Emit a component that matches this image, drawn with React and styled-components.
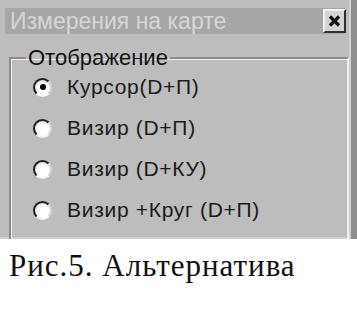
import React from "react";
import styled, { createGlobalStyle } from "styled-components";

const GlobalStyle = createGlobalStyle`
  html, body {
    margin: 0;
    padding: 0;
    background: #ffffff;
  }
  body {
    width: 357px;
    height: 313px;
    overflow: hidden;
  }
`;

const options = [
  { label: "Курсор(D+П)", checked: true },
  { label: "Визир (D+П)" },
  { label: "Визир (D+КУ)" },
  { label: "Визир +Круг (D+П)" },
];

const App = () => {
  return (
    <>
      <GlobalStyle />
      <Window>
        <TitleBar>
          <Title>Измерения на карте</Title>
          <CloseButton>
            <svg width="13" height="12" viewBox="0 0 13 12">
              <path d="M2 1.5 L11 10.5 M11 1.5 L2 10.5" stroke="#111" strokeWidth="3.2" />
            </svg>
          </CloseButton>
        </TitleBar>
        <Group>
          <Legend>Отображение</Legend>
          {options.map((opt) => (
            <Option key={opt.label}>
              <Radio checked={opt.checked} />
              <OptionLabel>{opt.label}</OptionLabel>
            </Option>
          ))}
        </Group>
      </Window>
      <Caption>Рис.5. Альтернатива</Caption>
    </>
  );
};

const Window = styled.div`
  height: 239px;
  box-sizing: border-box;
  background: #bdbdbd;
  padding: 8px 2px 0 5px;
  border-right: 6px solid #8e8e8e;
  box-shadow: inset -2px 0 0 #d2d2d2, inset 0 -2px 0 #cfcfcf;
  overflow: hidden;
  font-family: "Liberation Sans", Arial, sans-serif;
`;

const TitleBar = styled.div`
  display: flex;
  align-items: center;
  justify-content: space-between;
  height: 26px;
  margin-right: 4px;
  background: #a6a6a6;
  padding-left: 5px;
`;

const Title = styled.span`
  font-size: 23px;
  color: #d6d6d6;
  letter-spacing: 0;
  line-height: 26px;
`;

const CloseButton = styled.div`
  width: 23px;
  height: 24px;
  margin-right: -1px;
  box-sizing: border-box;
  background: #d4d4d4;
  border: 2px solid;
  border-color: #f2f2f2 #303030 #303030 #f2f2f2;
  display: flex;
  align-items: center;
  justify-content: center;
`;

const Group = styled.fieldset`
  margin: 11px 0 0 4px;
  padding: 6px 0 0 22px;
  height: 200px;
  border: 2px solid;
  border-color: #8c8c8c #f0f0f0 #f0f0f0 #8c8c8c;
  box-shadow: 1px 1px 0 #f0f0f0 inset;
  display: flex;
  flex-direction: column;
  gap: 21px;
`;

const Legend = styled.legend`
  font-size: 22px;
  color: #111;
  padding: 0 2px;
  margin-left: -7px;
`;

const Option = styled.div`
  display: flex;
  align-items: center;
  gap: 15px;
  height: 20px;
`;

const Radio = styled.span`
  position: relative;
  width: 15px;
  height: 15px;
  border-radius: 50%;
  flex: none;
  background: radial-gradient(circle at 55% 60%, #ffffff 45%, #e4e4e4 75%);
  border: 2px solid;
  border-color: #1e1e1e #d6d6d6 #f4f4f4 #1e1e1e;
  &::after {
    content: "";
    display: ${(p) => (p.checked ? "block" : "none")};
    position: absolute;
    left: 4.5px;
    top: 4.5px;
    width: 6px;
    height: 6px;
    border-radius: 50%;
    background: #000;
  }
`;

const OptionLabel = styled.span`
  font-size: 21px;
  color: #1a1a1a;
  letter-spacing: 0.7px;
`;

const Caption = styled.div`
  font-family: "Liberation Serif", "Times New Roman", serif;
  font-size: 31px;
  letter-spacing: 1px;
  color: #111;
  padding: 9px 0 0 9px;
`;

export default App;
